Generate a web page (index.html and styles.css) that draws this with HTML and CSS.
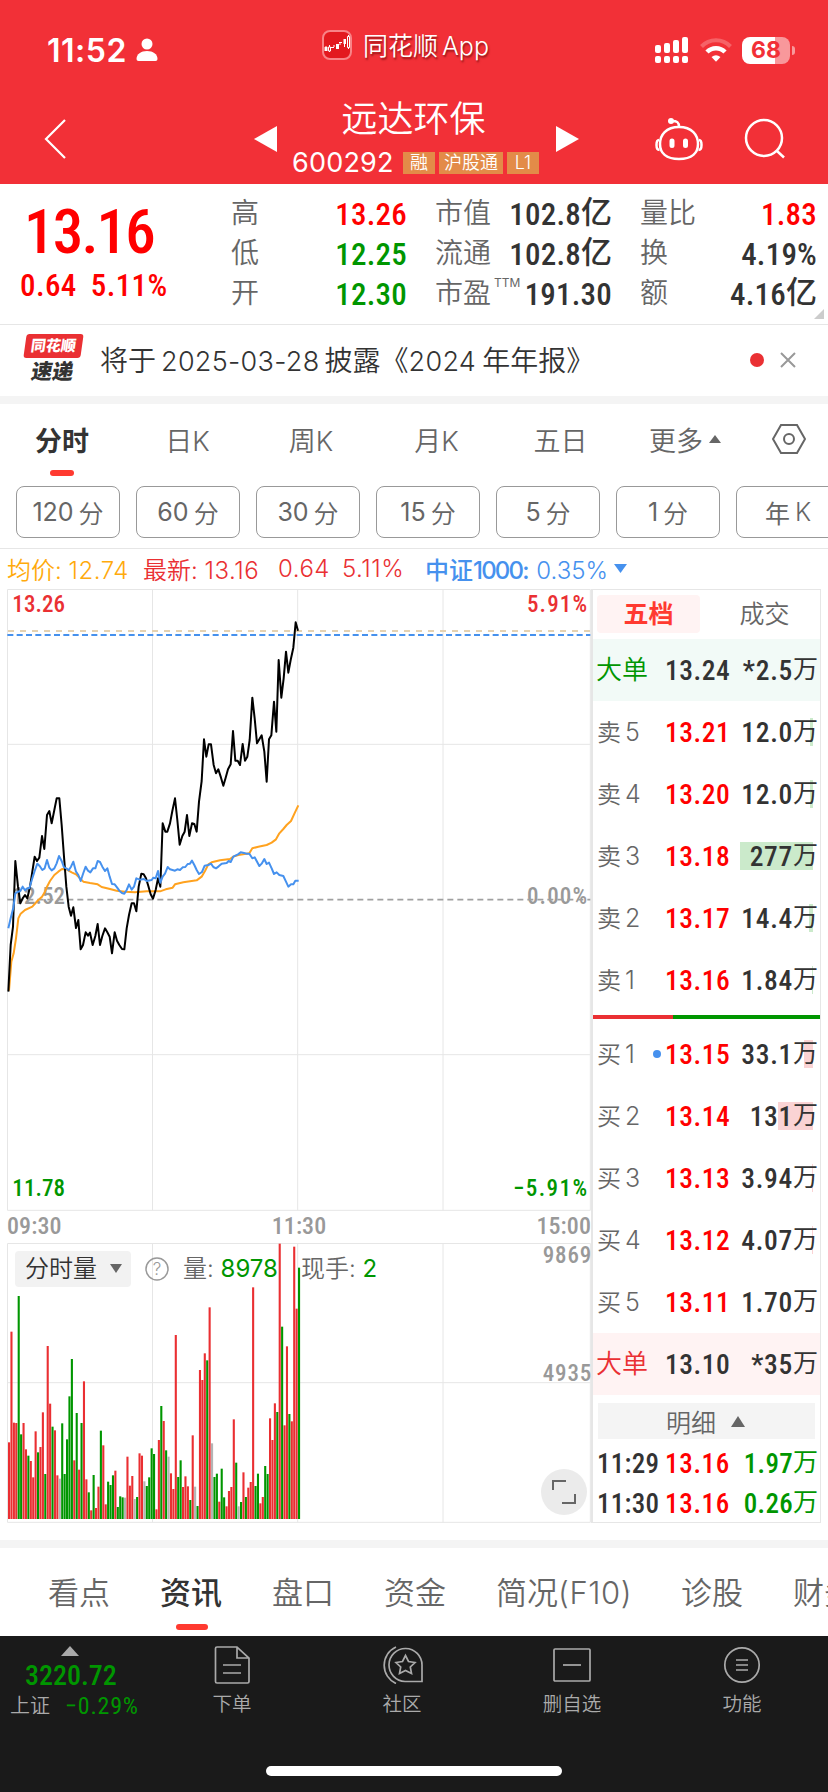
FILE: index.html
```html
<!DOCTYPE html>
<html lang="zh-CN">
<head>
    <meta charset="utf-8">
    <title>远达环保 600292</title>
    <link rel="stylesheet" href="styles.css">
</head>
<body>
    <header class="header">
        <div class="status">
            <span class="clock">11:52</span>
            <svg class="person" width="22" height="24" viewBox="0 0 22 24"><circle cx="11" cy="6" r="5.5" fill="#fff"/><path d="M0.5 21c0-5 4.500-8 10.500-8s10.500 3 10.500 8q0 2-2 2h-17q-2 0-2-2z" fill="#fff"/></svg>
            <div class="app-name">
                <svg width="30" height="30" viewBox="0 0 30 30">
                    <rect x="1" y="1" width="28" height="28" rx="7" fill="#e3191f" stroke="#f88387" stroke-width="2"/>
                    <path d="M2.500 17h3v4h-3zM14 14h3v5h-3zM21.500 9h2.500v5h-2.500z" fill="#fff"/>
                    <path d="M4 16v5M7.500 15v7M12 15v2M18 12v3M22.500 9v8M26.500 5v14M9 17.500h3M17 12.500h3" stroke="#fff" fill="none"/>
                    <path d="M6.500 17h2v4h-2zM25.500 6.500h2v11h-2z" stroke="#fff" fill="#e3191f"/>
                </svg>
                <span>同花顺 App</span>
            </div>
            <svg class="signal" width="34" height="28" viewBox="0 0 34 28" fill="#fff">
                <rect x="0" y="9" width="6" height="8" rx="2"/><rect x="9" y="7" width="6" height="10" rx="2"/>
                <rect x="18" y="4" width="6" height="13" rx="2"/><rect x="27" y="1" width="6" height="16" rx="2"/>
                <rect x="0" y="20" width="6" height="7" rx="2"/><rect x="9" y="20" width="6" height="7" rx="2"/>
                <rect x="18" y="20" width="6" height="7" rx="2"/><rect x="27" y="20" width="6" height="7" rx="2"/>
            </svg>
            <svg class="wifi" width="32" height="24" viewBox="0 0 32 24" fill="none" stroke="#fff">
                <path d="M1.500 8.500a20 20 0 0 1 29 0" stroke="#f88387" stroke-opacity=".6" stroke-width="4"/>
                <path d="M7 14a12.500 12.500 0 0 1 18 0" stroke-width="4.500"/>
                <path d="M11.500 19q4.500-3.500 9 0l-4.500 4.700z" fill="#fff" stroke="none"/>
            </svg>
            <div class="battery"><span>68</span></div>
            <i class="battery-cap"></i>
        </div>
        <div class="nav">
            <svg class="back" width="24" height="42" viewBox="0 0 24 42"><path d="M22 2L3 21l19 19" fill="none" stroke="#fff" stroke-width="2.200"/></svg>
            <svg class="prev" width="23" height="26"><path d="M23 0v26L0 13z" fill="#fff"/></svg>
            <div class="stock">
                <div class="stock-name">远达环保</div>
                <div class="stock-code">
                    <span class="code">600292</span>
                    <span class="tag">融</span>
                    <span class="tag tag-wide">沪股通</span>
                    <span class="tag">L1</span>
                </div>
            </div>
            <svg class="next" width="23" height="26"><path d="M0 0v26l23-13z" fill="#fff"/></svg>
            <svg class="robot" width="48" height="44" viewBox="0 0 48 44" fill="none" stroke="#fff" stroke-width="2.500">
                <path d="M24 10c13 0 19 8 19 17s-6 15-19 15S5 36 5 27s6-17 19-17z"/>
                <path d="M24 10c0-5-2-6-7-6"/><circle cx="16" cy="4" r="3" fill="#fff" stroke="none"/>
                <path d="M4 23q-2.500 0-2.500 5t3 5M44 23q2.500 0 2.500 5t-3 5"/>
                <path d="M17 24v4.500M30.500 24v4.500" stroke-width="5" stroke-linecap="round"/>
            </svg>
            <svg class="search" width="42" height="42" viewBox="0 0 42 42" fill="none" stroke="#fff" stroke-width="2.500"><circle cx="20" cy="20" r="18"/><path d="M33 33l7 6.500"/></svg>
        </div>
    </header>

    <section class="quote">
        <div class="quote-main">
            <div class="price">13.16</div>
            <div class="change"><span>0.64</span><span>5.11%</span></div>
        </div>
        <dl class="stats">
            <dt>高</dt><dd class="up">13.26</dd>
            <dt>市值</dt><dd>102.8<b>亿</b></dd>
            <dt>量比</dt><dd class="up">1.83</dd>
            <dt>低</dt><dd class="down">12.25</dd>
            <dt>流通</dt><dd>102.8<b>亿</b></dd>
            <dt>换</dt><dd>4.19%</dd>
            <dt>开</dt><dd class="down">12.30</dd>
            <dt>市盈<sup>TTM</sup></dt><dd>191.30</dd>
            <dt>额</dt><dd>4.16<b>亿</b></dd>
        </dl>
        <svg class="corner" width="10" height="10"><path d="M10 0v10H0z" fill="#ccc"/></svg>
    </section>

    <section class="notice">
        <div class="express">
            <div class="express-top"><span>同花顺</span></div>
            <div class="express-bottom">速递</div>
        </div>
        <div class="notice-text">将于<span class="num">2025-03-28</span>披露《<span class="num year">2024</span>年年报》</div>
        <i class="dot"></i>
        <svg class="close" width="16" height="16" viewBox="0 0 16 16"><path d="M1 1l14 14M15 1L1 15" stroke="#999" stroke-width="2"/></svg>
    </section>

    <nav class="periods">
        <span class="active">分时</span>
        <span>日K</span>
        <span>周K</span>
        <span>月K</span>
        <span>五日</span>
        <span class="more">更多<svg width="12" height="8"><path d="M6 0l6 8H0z" fill="#666"/></svg></span>
        <span><svg width="34" height="30" viewBox="0 0 34 30" fill="none" stroke="#666" stroke-width="2"><path d="M9 1h16l8 14-8 14H9L1 15z"/><circle cx="17" cy="15" r="5"/></svg></span>
    </nav>
    <div class="chips">
        <span>120<em>分</em></span>
        <span>60<em>分</em></span>
        <span>30<em>分</em></span>
        <span>15<em>分</em></span>
        <span>5<em>分</em></span>
        <span>1<em>分</em></span>
        <span>年<em>K</em></span>
    </div>
    <div class="legend">
        <span class="avg">均价: <i>12.74</i></span>
        <span class="last">最新: <i>13.16</i></span>
        <span class="last diff">0.64</span>
        <span class="last pct">5.11%</span>
        <span class="index"><b>中证<i>1000</i>:</b> 0.35%</span>
        <svg width="13" height="9"><path d="M0 0h13L6.500 9z" fill="#4691ee"/></svg>
    </div>

    <main class="board">
        <div class="charts">
            <svg class="price-chart" viewBox="21 12 1752 1866">
                <g class="grid">
                    <path d="M22.500 13.500H1771V1876H22.500zM457.500 13v1863M893 13v1863M1329 13v1863M22 478H1771M22 1409H1771"/>
                </g>
                <path d="M24 138H1771" stroke="#e5d2b2" stroke-width="6" stroke-dasharray="18 18"/>
                <path d="M22 150H1771" stroke="#4691ee" stroke-width="6" stroke-dasharray="18 10"/>
                <g class="axis">
                    <text x="37" y="80" textLength="158" class="up">13.26</text>
                    <text x="1581" y="80" textLength="180" class="up">5.91%</text>
                    <text x="37" y="956" textLength="158">12.52</text>
                    <text x="1581" y="956" textLength="180">0.00%</text>
                    <text x="37" y="1832" textLength="158" class="down">11.78</text>
                    <text x="1539" y="1832" textLength="222" class="down">−5.91%</text>
                </g>
                <path d="M22 944H1771" stroke="#a0a0a0" stroke-width="5" stroke-dasharray="18 12"/>
                <polyline class="line" stroke="#ffa21f" points="27,1217 34,1130 41,1105 48,1060 55,1000 62,986 75,975 97,965 112,948 126,935 135,920 141,905 150,888 163,870 175,860 186,852 200,853 215,862 228,868 240,880 250,890 270,894 293,898 305,906 330,912 350,917 375,920 405,922 440,919 480,919 497,913 518,908 525,898 550,892 590,886 605,875 615,858 625,838 635,832 660,826 690,822 700,815 715,810 748,805 757,790 775,785 800,780 815,773 828,763 838,745 850,732 860,720 873,708 885,682 895,661"/>
                <polyline class="line" stroke="#000" points="25,1220 32,1080 39,1025 46,828 54,905 61,955 68,940 75,930 82,940 90,905 97,860 104,815 111,828 118,818 126,753 133,792 141,690 148,678 155,715 163,675 170,640 178,640 185,720 192,815 199,905 206,965 213,992 220,967 228,1029 235,1005 242,1093 249,1080 257,1042 264,1052 270,1043 278,1080 286,1053 293,1017 300,1080 307,1053 315,1030 322,1042 329,1055 336,1105 344,1042 351,1067 358,1080 366,1092 373,1093 380,1030 387,990 395,955 402,955 409,979 416,905 424,866 431,868 438,880 445,903 452,928 459,941 467,915 474,880 481,905 488,715 496,740 502,740 510,715 517,678 525,640 532,705 539,779 547,753 554,740 561,690 568,753 576,715 583,717 590,740 597,650 605,588 612,463 619,515 626,478 633,478 641,540 648,565 655,553 663,578 670,602 677,578 684,553 692,538 699,438 706,527 713,527 720,540 728,477 735,527 742,515 749,465 757,338 764,400 771,475 778,463 785,451 793,500 800,590 807,463 814,451 822,350 829,440 836,225 844,338 851,280 858,200 865,263 872,225 880,188 887,112 894,137"/>
                <polyline class="line" stroke="#4691ee" points="25,1030 32,1000 40,968 46,925 54,920 61,918 68,905 75,916 82,910 88,910 97,880 104,858 112,836 119,843 127,855 134,850 141,825 148,848 155,856 163,850 170,835 177,813 185,828 192,847 199,850 206,856 213,845 220,830 228,860 235,870 242,888 250,864 257,845 264,857 271,862 279,850 286,850 293,828 300,831 307,845 315,858 322,850 329,875 336,897 344,898 351,907 358,917 366,924 373,926 380,915 387,898 395,914 402,905 409,880 420,884 432,882 440,888 455,885 460,878 467,880 474,858 481,893 488,875 495,866 503,846 510,853 525,857 532,853 540,855 548,847 556,846 563,837 570,836 576,827 583,840 590,855 597,867 606,861 614,842 625,840 633,836 640,846 648,850 656,844 665,836 680,834 686,828 692,831 700,815 714,808 722,802 732,804 740,806 748,806 757,820 764,817 778,843 785,836 793,822 800,837 807,833 815,850 822,867 830,862 838,870 850,873 858,890 865,905 873,898 880,898 886,887 896,887"/>
            </svg>
            <div class="times"><span>09:30</span><span>11:30</span><span>15:00</span></div>
            <div class="volume">
                <svg class="volume-chart" viewBox="21 159 1752 840">
                    <g class="grid"><path d="M22.500 160.500H1771V997H22.500zM457.500 160v837M893 160v837M1329 160v837M22 578H1771"/></g>
                </svg>
                <div class="volume-bar">
                    <span class="select">分时量<svg width="12" height="9"><path d="M0 0h12L6 9z" fill="#666"/></svg></span>
                    <svg class="help" width="24" height="24"><circle cx="12" cy="12" r="11" fill="none" stroke="#999" stroke-width="1.500"/><text x="12" y="18" text-anchor="middle">?</text></svg>
                    <span class="vol-label">量: <b>8978</b></span>
                    <span>现手: <b>2</b></span>
                </div>
                <svg class="volume-chart" id="bars" viewBox="21 159 1752 840"></svg>
                <span class="vol-max">9869</span>
                <span class="vol-mid">4935</span>
                <div class="expand"><svg width="24" height="24" viewBox="0 0 24 24" fill="none" stroke="#666" stroke-width="2"><path d="M1 10V1h13M23 14v9H10"/></svg></div>
            </div>
        </div>
        <aside class="depth">
            <div class="depth-tabs"><span class="on">五档</span><span>成交</span></div>
            <div class="row big sell"><span>大单</span><span>13.24</span><span>*2.5<b>万</b></span></div>
            <div class="row ask"><span>卖<i>5</i></span><span>13.21</span><span>12.0<b>万</b></span><em style="width:3px"></em></div>
            <div class="row ask"><span>卖<i>4</i></span><span>13.20</span><span>12.0<b>万</b></span><em style="width:3px"></em></div>
            <div class="row ask"><span>卖<i>3</i></span><span>13.18</span><span>277<b>万</b></span><em style="width:73px"></em></div>
            <div class="row ask"><span>卖<i>2</i></span><span>13.17</span><span>14.4<b>万</b></span><em style="width:4px"></em></div>
            <div class="row ask"><span>卖<i>1</i></span><span>13.16</span><span>1.84<b>万</b></span><em style="width:1px"></em></div>
            <div class="ratio"><i></i></div>
            <div class="row bid current"><span>买<i>1</i></span><span>13.15</span><span>33.1<b>万</b></span><em style="width:9px"></em></div>
            <div class="row bid"><span>买<i>2</i></span><span>13.14</span><span>131<b>万</b></span><em style="width:35px"></em></div>
            <div class="row bid"><span>买<i>3</i></span><span>13.13</span><span>3.94<b>万</b></span><em style="width:1px"></em></div>
            <div class="row bid"><span>买<i>4</i></span><span>13.12</span><span>4.07<b>万</b></span><em style="width:1px"></em></div>
            <div class="row bid"><span>买<i>5</i></span><span>13.11</span><span>1.70<b>万</b></span></div>
            <div class="row big buy"><span>大单</span><span>13.10</span><span>*35<b>万</b></span></div>
            <div class="detail">明细<svg width="14" height="11"><path d="M7 0l7 11H0z" fill="#666"/></svg></div>
            <div class="tick"><span>11:29</span><span>13.16</span><span>1.97<b>万</b></span></div>
            <div class="tick"><span>11:30</span><span>13.16</span><span>0.26<b>万</b></span></div>
        </aside>
    </main>

    <nav class="sections">
        <span>看点</span>
        <span class="active">资讯</span>
        <span>盘口</span>
        <span>资金</span>
        <span class="brief">简况<i>(F10)</i></span>
        <span>诊股</span>
        <span>财务</span>
    </nav>

    <footer class="footer">
        <div class="toolbar">
            <div class="index-box">
                <svg width="18" height="10"><path d="M9 0l9 10H0z" fill="#aaa"/></svg>
                <div class="index-value">3220.72</div>
                <div class="index-change">上证<span>−0.29%</span></div>
            </div>
            <div class="tool">
                <svg width="38" height="38" viewBox="0 0 38 38"><path d="M24 1H4q-1.500 0-1.500 1.500v33Q2.500 37 4 37h30.500q1.500 0 1.500-1.500V12zM24 1v11h12M10 19h18M10 27h18"/></svg>
                <span>下单</span>
            </div>
            <div class="tool">
                <svg width="42" height="38" viewBox="0 0 42 38"><path d="M15 1A20 20 0 0 0 15 37.500M41 35.500H24A16.500 16.500 0 1 1 41 19z"/><path d="M24.500 9.500l3 6 6.500 1-4.700 4.500 1.200 6.500-6-3.100-6 3.100 1.200-6.500-4.700-4.500 6.500-1z"/></svg>
                <span>社区</span>
            </div>
            <div class="tool">
                <svg width="40" height="38" viewBox="0 0 40 38"><rect x="2" y="3" width="36" height="32" rx="1"/><path d="M11 19h18"/></svg>
                <span>删自选</span>
            </div>
            <div class="tool">
                <svg width="38" height="38" viewBox="0 0 38 38"><circle cx="19" cy="19" r="17.200"/><path d="M13 14h12M13 19h12M13 24h12"/></svg>
                <span>功能</span>
            </div>
        </div>
        <div class="home"></div>
    </footer>

    <script>
        // one bar per minute: direction (r/g/n) and top of the bar, base line is 987
        var data = "r757 r425 r698 r699 g318 g733 r699 r778 g797 r813 r862 r724 g787 r771 r667 g852 r468 r641 g710 r721 " +
            "r856 n866 g700 g852 g748 g619 g507 r811 g669 r839 g699 r574 r868 g907 r961 g855 r954 r890 g722 r766 " +
            "r943 g875 g885 g856 r842 g951 g919 g922 n923 r800 r887 r858 n927 g921 r790 r797 n874 g888 g862 g775 " +
            "g792 r958 r750 g648 r693 g781 n800 r850 r897 r435 g861 g811 r891 r859 r889 g930 r736 n890 g948 r540 " +
            "r570 r490 g511 r352 n760 g861 g851 r935 g836 g922 r949 r903 r891 r688 g818 n949 g936 r847 g921 r893 " +
            "r876 r292 g888 g851 r940 r921 g828 g852 r685 r750 r640 g666 r161 g410 r706 r469 g672 r694 r170 r356 g233";
        var colors = { r: "#ea2f32", g: "#009600", n: "#b4b4b4" };
        var svg = document.getElementById("bars");
        data.split(" ").forEach(function(item, i) {
            var top = Number(item.slice(1));
            var rect = document.createElementNS("http://www.w3.org/2000/svg", "rect");
            rect.setAttribute("x", 24 + i * 7.25);
            rect.setAttribute("y", top);
            rect.setAttribute("width", 6.3);
            rect.setAttribute("height", 987 - top);
            rect.setAttribute("fill", colors[item[0]]);
            svg.appendChild(rect);
        });
    </script>
</body>
</html>
```
FILE: styles.css
```css
* {
    box-sizing: border-box;
}

body {
    margin: 0;
    width: 828px;
    height: 1792px;
    overflow: hidden;
    background: #fff;
    color: #666;
    font-family: Inter, "Noto Sans CJK SC", sans-serif;
    white-space: nowrap;
}

i, em {
    font-style: normal;
}

svg {
    display: block;
    flex: none;
}

/* header */
.header {
    height: 184px;
    background: #f23037;
    color: #fff;
}

.status {
    display: flex;
    height: 92px;
    padding: 8px 0 0 47px;
    align-items: center;
}

.clock {
    width: 80px;
    font-size: 32px;
    font-weight: 600;
    letter-spacing: 0.5px;
}

.person {
    margin-left: 9px;
}

.app-name {
    display: flex;
    align-items: center;
    gap: 11px;
    margin: -10px 0 0 164px;
    width: 333px;
    font-size: 25px;
    font-weight: 350;
    word-spacing: -3px;
    text-shadow: 1px 2px 2px rgba(80, 0, 0, .6);
}

.app-name span {
    margin-top: -2px;
}

.wifi {
    margin-left: 11px;
}

.battery {
    width: 48px;
    height: 27px;
    margin-left: 10px;
    border-radius: 8px;
    background: linear-gradient(90deg, #fff 33px, #f8989b 33px);
    color: #f23037;
    font-size: 23px;
    font-weight: 700;
    line-height: 27px;
    text-align: center;
}

.battery-cap {
    width: 3px;
    height: 9px;
    margin-left: 2px;
    border-radius: 0 4px 4px 0;
    background: #f8989b;
}

.nav {
    display: flex;
    height: 92px;
    padding-left: 43px;
}

.back {
    margin-top: 26px;
}

.prev {
    margin: 34px 0 0 187px;
}

.stock {
    width: 279px;
}

.stock-name {
    padding: 3px 6px 0 0;
    font-size: 36px;
    font-weight: 350;
    line-height: 48px;
    text-align: center;
}

.stock-code {
    display: flex;
    gap: 4px;
    padding: 7px 0 0 15px;
    line-height: 26px;
}

.code {
    width: 107px;
    font-size: 27px;
    letter-spacing: 0.2px;
}

.tag {
    width: 32px;
    height: 22px;
    margin-top: 2px;
    background: #e38b48;
    font-size: 18px;
    font-weight: 350;
    line-height: 22px;
    text-align: center;
}

.tag-wide {
    width: 64px;
}

.next {
    margin-top: 34px;
}

.robot {
    margin: 25px 0 0 76px;
}

.search {
    margin: 26px 0 0 41px;
}

/* quote */
.quote {
    position: relative;
    display: flex;
    height: 141px;
    border-bottom: 1px solid #e6e6e6;
    font-family: Roboto, "Noto Sans CJK SC", sans-serif;
    font-stretch: 85%;
}

.up {
    color: #f00;
}

.down {
    color: #009600;
}

.quote-main {
    width: 231px;
    padding: 17px 0 0 20px;
    color: #f00;
}

.price {
    padding-left: 4px;
    font-size: 61px;
    font-weight: 550;
    letter-spacing: -1.8px;
    line-height: 62px;
}

.change {
    display: flex;
    gap: 14px;
    margin-top: 5px;
    font-size: 31px;
    font-weight: 500;
    letter-spacing: 0.4px;
    line-height: 36px;
}

.stats {
    display: grid;
    grid-template-columns: 58px 118px 88px 117px 84px 121px;
    grid-template-rows: repeat(3, 40px);
    margin: 10px 0 0;
    padding: 0;
}

.stats dt {
    font-size: 28px;
    font-weight: 350;
    line-height: 40px;
}

.stats dt:nth-of-type(3n+2), .stats dt:nth-of-type(3n) {
    padding-left: 28px;
}

.stats dd {
    display: flex;
    justify-content: flex-end;
    margin: 0;
    color: #333;
    font-size: 31px;
    font-weight: 500;
    letter-spacing: 0.2px;
    line-height: 42px;
}

.stats .up {
    color: #f00;
}

.stats .down {
    color: #009600;
}

.stats b {
    font-weight: 500;
    letter-spacing: 0;
    line-height: 38px;
}

.stats sup {
    position: relative;
    top: -6px;
    margin-left: 3px;
    font-family: Inter, sans-serif;
    font-size: 12px;
    font-weight: 400;
    line-height: 0;
}

.corner {
    position: absolute;
    right: 4px;
    bottom: 5px;
}

/* notice */
.notice {
    display: flex;
    align-items: center;
    height: 79px;
    padding: 0 32px 8px 25px;
    border-bottom: 8px solid #f4f4f4;
}

.express {
    width: 60px;
    margin-top: 6px;
    font-weight: 900;
    text-align: center;
}

.express-top {
    width: 57px;
    height: 24px;
    border-radius: 3px;
    background: #ea3033;
    color: #fff;
    font-size: 15px;
    line-height: 23px;
    transform: skewX(-8deg);
}

.express-bottom {
    margin-left: -5px;
    color: #333;
    font-size: 21px;
    line-height: 27px;
    transform: skewX(-10deg);
}

.notice-text {
    flex: 1;
    margin: 5px 0 0 15px;
    color: #333;
    font-size: 28px;
    font-weight: 350;
}

.num {
    margin: 0 5px;
    font-size: 27px;
    letter-spacing: 0.3px;
}

.year {
    margin: 0 6px 0 0;
}

.dot {
    width: 14px;
    height: 14px;
    margin: 7px 16px 0 0;
    border-radius: 50%;
    background: #ea3033;
}

.close {
    margin: 7px 0 0;
}

/* period tabs */
.periods {
    display: grid;
    grid-template-columns: 124px 127px 120px 131px 117px 132px 75px;
    align-items: center;
    justify-items: center;
    height: 72px;
    padding-bottom: 2px;
    font-size: 27px;
    font-weight: 350;
}

.periods .active {
    position: relative;
    color: #333;
    font-weight: 600;
}

.periods .active::after {
    content: "";
    position: absolute;
    left: 15px;
    bottom: -17px;
    width: 24px;
    height: 6px;
    border-radius: 3px;
    background: #ff3a30;
}

.more {
    display: flex;
    align-items: center;
    gap: 6px;
}

.chips {
    display: flex;
    gap: 16px;
    height: 73px;
    padding: 10px 0 0 16px;
    border-bottom: 1px solid #e6e6e6;
    overflow: hidden;
}

.chips span {
    display: flex;
    flex: none;
    align-items: center;
    justify-content: center;
    gap: 5px;
    width: 104px;
    height: 52px;
    border: 1px solid #999;
    border-radius: 8px;
    font-size: 25px;
}

.chips em {
    font-weight: 350;
}

.legend {
    display: flex;
    align-items: center;
    height: 40px;
    padding: 0 0 2px 7px;
    font-size: 24px;
    font-weight: 350;
}

.legend .avg i, .legend .last i, .legend .diff, .legend .pct {
    letter-spacing: 0.5px;
}

.avg {
    width: 136px;
    color: #ffaa0c;
}

.last {
    width: 135px;
    color: #ea3033;
}

.legend .diff {
    width: 64px;
}

.legend .pct {
    width: 83px;
}

.index {
    width: 189px;
    color: #4691ee;
}

.index b {
    font-weight: 500;
}

.index b i {
    letter-spacing: -1.8px;
}

/* board */
.board {
    display: flex;
    height: 934px;
    padding-left: 7px;
}

.charts {
    width: 584px;
    font-family: Roboto, sans-serif;
    font-stretch: 85%;
}

.price-chart {
    width: 584px;
    height: 622px;
}

.grid {
    fill: none;
    stroke: #e6e6e6;
    stroke-width: 3;
}

.line {
    fill: none;
    stroke-width: 6;
    stroke-linejoin: round;
}

.axis {
    fill: #999;
    font-size: 69px;
    font-weight: 500;
}

.axis .up {
    fill: #ea3033;
}

.axis .down {
    fill: #009600;
}

.times {
    display: flex;
    justify-content: space-between;
    height: 32px;
    color: #999;
    font-size: 24px;
    font-weight: 500;
    letter-spacing: 0.1px;
    line-height: 31px;
}

.volume {
    position: relative;
    height: 280px;
}

.volume-chart {
    position: absolute;
    top: 0;
    left: 0;
    width: 584px;
    height: 280px;
}

.volume-bar {
    position: relative;
    display: flex;
    align-items: center;
    padding: 8px 0 0 8px;
    font-family: Inter, "Noto Sans CJK SC", sans-serif;
    font-size: 24px;
    font-weight: 350;
    line-height: 32px;
}

.volume-bar span {
    padding-bottom: 1px;
}

.volume-bar b {
    color: #009600;
    font-weight: 400;
}

.select {
    display: flex;
    align-items: center;
    gap: 13px;
    width: 116px;
    height: 36px;
    padding-left: 10px;
    border-radius: 4px;
    background: #f2f2f2;
    color: #333;
}

.help {
    margin: 0 14px 0 14px;
    fill: #999;
    font-size: 17px;
}

.vol-label {
    width: 118px;
}

.vol-max, .vol-mid {
    position: absolute;
    right: -1px;
    top: -1px;
    color: #999;
    font-size: 23px;
    font-weight: 500;
    letter-spacing: 0.8px;
}

.vol-mid {
    top: 117px;
}

.expand {
    position: absolute;
    right: 4px;
    bottom: 8px;
    display: flex;
    align-items: center;
    justify-content: center;
    width: 46px;
    height: 46px;
    border-radius: 50%;
    background: #ebebeb;
}

/* order depth */
.depth {
    width: 230px;
    border: 1px solid #e6e6e6;
    border-left-width: 2px;
    font-family: Roboto, "Noto Sans CJK SC", sans-serif;
    font-stretch: 85%;
}

.depth-tabs {
    display: flex;
    height: 49px;
    padding: 5px 0 0 4px;
    font-size: 25px;
    font-weight: 350;
    line-height: 40px;
    text-align: center;
}

.depth-tabs span {
    flex: none;
    width: 103px;
    height: 38px;
    margin-right: 13px;
    border-radius: 4px;
}

.depth-tabs .on {
    background: #fff3f3;
    color: #ff3a30;
    font-weight: 600;
}

.row {
    position: relative;
    z-index: 0;
    display: grid;
    grid-template-columns: 68px 70px 83px;
    height: 62px;
    padding-left: 4px;
    font-size: 27.5px;
    font-weight: 500;
    letter-spacing: 0.7px;
    line-height: 64px;
}

.row span:first-child {
    font-size: 24px;
    font-weight: 350;
    line-height: 62px;
    letter-spacing: 0;
}

.row i {
    margin-left: 4px;
    font-family: Inter, sans-serif;
    font-weight: 300;
    font-size: 25px;
}

.row span:nth-child(2) {
    color: #f00;
    letter-spacing: 0.5px;
}

.row span:nth-child(3) {
    display: flex;
    justify-content: flex-end;
    color: #333;
}

.row b, .tick b {
    font-size: 25px;
    font-weight: 400;
    letter-spacing: 0;
    line-height: 62px;
}

.row em {
    position: absolute;
    z-index: -1;
    right: 7px;
    top: 17px;
    height: 28px;
    background: #cbeacb;
}

.bid em {
    background: #fad3d4;
}

.current::before {
    content: "";
    position: absolute;
    left: 60px;
    top: 27px;
    width: 8px;
    height: 8px;
    border-radius: 50%;
    background: #4691ee;
}

.row.big span:nth-child(2) {
    color: #333;
}

.row.big span:first-child {
    margin-left: -1px;
    font-size: 26px;
}

.sell {
    background: #f2faf7;
    color: #009600;
}

.buy {
    background: #fff3f3;
    color: #ea3033;
}

.ratio {
    height: 4px;
    margin: 4px 0;
    background: #009600;
}

.ratio i {
    display: block;
    width: 80px;
    height: 4px;
    background: #ea3033;
}

.detail {
    display: flex;
    align-items: center;
    justify-content: center;
    gap: 15px;
    height: 36px;
    margin: 8px 5px 5px;
    padding-right: 2px;
    background: #f4f4f4;
    font-size: 25px;
    font-weight: 350;
}

.tick {
    display: grid;
    grid-template-columns: 68px 70px 83px;
    height: 40px;
    padding-left: 4px;
    font-size: 27px;
    font-weight: 500;
    letter-spacing: 0.3px;
    line-height: 40px;
    color: #333;
}

.tick b {
    line-height: 38px;
}

.tick span:nth-child(2) {
    color: #f00;
    letter-spacing: 0.7px;
}

.tick span:nth-child(3) {
    display: flex;
    justify-content: flex-end;
    color: #009600;
}

/* section tabs */
.sections {
    display: flex;
    gap: 50px;
    height: 113px;
    padding: 26px 0 0 48px;
    background: linear-gradient(#fff 17px, #f4f4f4 17px, #f4f4f4 25px, #fff 25px);
    font-size: 31px;
    font-weight: 350;
    line-height: 87px;
}

.sections .brief {
    width: 135px;
}

.sections i {
    letter-spacing: 0.6px;
}

.sections .active {
    position: relative;
    color: #333;
    font-weight: 500;
}

.sections .active::after {
    content: "";
    position: absolute;
    left: 16px;
    top: 75px;
    width: 32px;
    height: 6px;
    border-radius: 3px;
    background: #ff3a30;
}

/* footer */
.footer {
    height: 156px;
    background: #1a1a1a;
    color: #aaa;
}

.toolbar {
    display: flex;
    height: 130px;
}

.index-box {
    width: 147px;
    font-family: Roboto, "Noto Sans CJK SC", sans-serif;
    font-stretch: 85%;
}

.index-box svg {
    margin: 10px 0 0 61px;
}

.index-value {
    margin: 3px 0 0 25px;
    color: #009600;
    font-size: 28px;
    font-weight: 500;
    letter-spacing: 0;
    line-height: 34px;
}

.index-change {
    display: flex;
    gap: 15px;
    padding-left: 10px;
    font-size: 20px;
    font-weight: 350;
    line-height: 26px;
}

.index-change span {
    color: #009600;
    font-size: 24px;
    font-weight: 450;
    letter-spacing: 0.8px;
}

.tool {
    display: flex;
    flex-direction: column;
    align-items: center;
    width: 170px;
    padding-top: 10px;
    font-size: 19.5px;
    font-weight: 350;
    line-height: 40px;
}

.tool svg {
    fill: none;
    stroke: #aaa;
    stroke-width: 1.7;
}

.home {
    width: 296px;
    height: 10px;
    margin: 0 auto;
    border-radius: 5px;
    background: #fff;
}
```
